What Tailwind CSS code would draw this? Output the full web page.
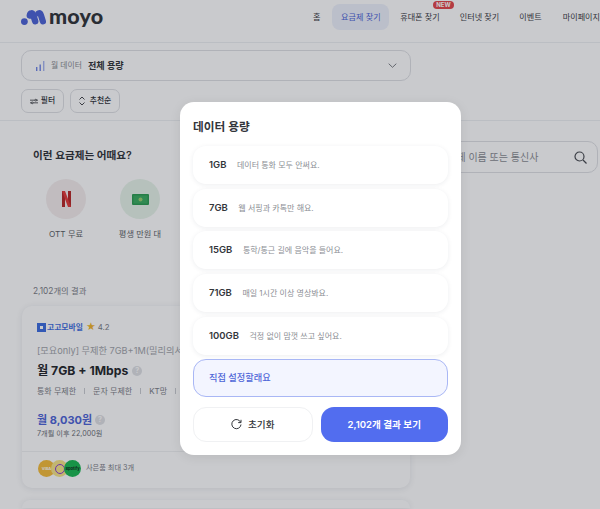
<!DOCTYPE html>
<html lang="ko">
<head>
    <meta charset="UTF-8">
    <title>moyo</title>
    <script src="https://cdn.jsdelivr.net/npm/@tailwindcss/browser@4"></script>
</head>
<body class="relative h-[509px] w-[600px] overflow-hidden bg-white text-[#26282c] font-['Inter','Noto_Sans_CJK_KR',sans-serif]">

    <!-- Header -->
    <header class="flex h-[43px] items-center border-b border-[#eef0f2] pb-[8px] pl-[21px]">
        <svg class="h-[15px] w-[25px] shrink-0" viewBox="0 0 25 15" fill="none" stroke="#4f66d8" stroke-linecap="round">
            <circle cx="3.4" cy="11.6" r="3.4" fill="#4f66d8" stroke="none"/>
            <path d="M8.8 5.5c.4-3 2.6-2.6 3.4-.6l2 6.4" stroke-width="6.4"/>
            <path d="M17.5 3.4c1.2-.4 1.9.3 2.4 1.6l2 6.4" stroke-width="6.2"/>
        </svg>
        <span class="ml-[3px] text-[21.5px] leading-none font-black tracking-[0.2px] font-['Lato'] text-[#33363b]">moyo</span>
        <nav class="ml-auto flex w-[287px] shrink-0 items-center text-[8.1px] whitespace-nowrap text-[#3d4046]">
            <span class="mr-[12px]">홈</span>
            <span class="flex h-[26px] w-[58px] items-center justify-center rounded-[8px] bg-[#edf1fb] text-[#4f66d8]">요금제 찾기</span>
            <span class="relative ml-[11px] w-[40px]">휴대폰 찾기
                <span class="absolute -top-[10px] right-[-14px] rounded-full bg-[#e5484d] px-[3px] text-[6px] leading-[8px] font-bold text-white">NEW</span>
            </span>
            <span class="ml-[20px] w-[40px]">인터넷 찾기</span>
            <span class="ml-[20px] w-[23px]">이벤트</span>
            <span class="ml-[21px]">마이페이지</span>
        </nav>
    </header>

    <!-- Filters -->
    <section class="border-b border-[#eef0f2] px-[21px] py-[7px]">
        <div class="flex h-[31px] w-[390px] items-center rounded-[10px] border border-[#dfe1e5] pr-[13px] pl-[14px]">
            <svg class="h-[10px] w-[9px]" viewBox="0 0 9 10" fill="#7388e6">
                <rect x="0" y="6" width="1.4" height="4"/>
                <rect x="3.5" y="3.5" width="1.4" height="6.5"/>
                <rect x="7" y="0" width="1.4" height="10" fill="#a9b7f0"/>
            </svg>
            <span class="ml-[6px] text-[7.8px] text-[#8b8e94]">월 데이터</span>
            <span class="ml-[6px] text-[9.1px] font-semibold text-[#33363b]">전체 용량</span>
            <svg class="ml-auto h-[5px] w-[9px]" viewBox="0 0 9 5" fill="none" stroke="#6d7077" stroke-width=".9">
                <path d="M.7.7l3.8 3.6 3.8-3.6"/>
            </svg>
        </div>
        <div class="mt-[8px] flex gap-[6px]">
            <div class="flex h-[24px] w-[43px] items-center justify-center gap-[3px] rounded-[7px] border border-[#dfe1e5] text-[7.8px] font-medium text-[#33363b]">
                <svg class="h-[7px] w-[8px]" viewBox="0 0 9 7" fill="none" stroke="#33363b" stroke-width=".9">
                    <path d="M0 2h5.5M7.5 2H9M0 5h1.5M3.5 5H9"/><circle cx="6.5" cy="2" r="1"/><circle cx="2.5" cy="5" r="1"/>
                </svg>
                필터
            </div>
            <div class="flex h-[24px] w-[50px] items-center justify-center gap-[5px] rounded-[7px] border border-[#dfe1e5] text-[7.8px] font-medium text-[#33363b]">
                <svg class="h-[10px] w-[6px]" viewBox="0 0 6 10" fill="none" stroke="#33363b" stroke-width=".9">
                    <path d="M.5 3.5L3 1l2.5 2.5M.5 6.5L3 9l2.5-2.5"/>
                </svg>
                추천순
            </div>
        </div>
    </section>

    <!-- Content -->
    <main class="flex pl-[22px]">
        <div class="w-[388px]">
            <h2 class="mt-[27px] ml-[11px] text-[10.6px] leading-[16px] font-semibold text-[#33363b]">이런 요금제는 어때요?</h2>
            <div class="mt-[15px] ml-[24px] flex gap-[34px]">
                <div class="flex w-[40px] flex-col items-center">
                    <div class="flex h-[40px] w-[40px] items-center justify-center rounded-full bg-[#f5eeee]">
                        <svg class="h-[16px] w-[9px]" viewBox="0 0 9 16">
                            <path d="M0 0h3v16l-3 0z" fill="#b92a2a"/><path d="M6 0h3v16H6z" fill="#b92a2a"/><path d="M0 0h3l6 16H6z" fill="#e33b3b"/>
                        </svg>
                    </div>
                    <span class="mt-[9px] text-[8.2px] leading-[12px] whitespace-nowrap text-[#5c5f66]">OTT 무료</span>
                </div>
                <div class="flex w-[40px] flex-col items-center">
                    <div class="flex h-[40px] w-[40px] items-center justify-center rounded-full bg-[#e7f4ea]">
                        <svg class="h-[11px] w-[17px]" viewBox="0 0 17 11">
                            <rect width="17" height="11" rx="1" fill="#2f9e54"/><rect x="1.5" y="1.5" width="14" height="8" fill="#3dae62"/><circle cx="8.5" cy="5.5" r="2" fill="#9ccf73"/>
                        </svg>
                    </div>
                    <span class="mt-[9px] text-[8.2px] leading-[12px] whitespace-nowrap text-[#5c5f66]">평생 만원 대</span>
                </div>
            </div>
            <p class="mt-[45px] ml-[11px] text-[8.3px] leading-[12px] text-[#7d8087]">2,102개의 결과</p>

            <!-- Plan card -->
            <article class="mt-[9px] h-[182px] rounded-[10px] bg-white shadow-[0_1px_6px_rgba(30,40,70,0.1)]">
                <div class="px-[15px] pt-[15px]">
                    <div class="flex items-center text-[7.8px] leading-[12px]">
                        <span class="flex h-[9px] w-[9px] items-center justify-center bg-[#3f6fe0]"><span class="h-[3px] w-[3px] bg-white"></span></span>
                        <span class="ml-[1px] font-bold text-[#3f6fe0]">고고모바일</span>
                        <span class="ml-[3px] text-[9.5px] leading-[12px] text-[#f1b52c]">★</span>
                        <span class="ml-[2px] text-[#7d8087]">4.2</span>
                    </div>
                    <p class="mt-[12px] text-[9.2px] leading-[12px] whitespace-nowrap text-[#a3a6ab]">[모요only] 무제한 7GB+1M(밀리의서재 무료)</p>
                    <div class="mt-[5px] flex items-center">
                        <span class="text-[12.2px] leading-[18px] font-bold text-[#26282c]">월 7GB + 1Mbps</span>
                        <span class="ml-[4px] flex h-[10px] w-[10px] items-center justify-center rounded-full bg-[#dfe1e5] text-[7px] font-bold text-white">?</span>
                    </div>
                    <div class="mt-[5px] flex items-center gap-[8px] text-[8px] leading-[12px] text-[#7d8087]">
                        <span>통화 무제한</span><span class="h-[6px] w-px bg-[#c9ccd1]"></span><span>문자 무제한</span><span class="h-[6px] w-px bg-[#c9ccd1]"></span><span>KT망</span><span class="h-[6px] w-px bg-[#c9ccd1]"></span>
                    </div>
                    <div class="mt-[15px] flex items-center">
                        <span class="text-[11px] leading-[16px] font-bold text-[#4f66d8]">월 8,030원</span>
                        <span class="ml-[3px] flex h-[10px] w-[10px] items-center justify-center rounded-full bg-[#dfe1e5] text-[7px] font-bold text-white">?</span>
                    </div>
                    <p class="text-[7.2px] leading-[11px] text-[#6d7077]">7개월 이후 22,000원</p>
                </div>
                <div class="mt-[12px] flex items-center border-t border-[#f0f1f3] pt-[8px] pl-[16px]">
                    <span class="flex h-[17px] w-[17px] items-center justify-center rounded-full bg-[#f5bd3c] text-[4px] font-bold text-white">VISA</span>
                    <span class="-ml-[4px] flex h-[17px] w-[17px] items-center justify-center rounded-full bg-[#f7e58a]"><span class="h-[10px] w-[10px] rounded-full border border-[#8a3fd1]"></span></span>
                    <span class="-ml-[4px] flex h-[17px] w-[17px] items-center justify-center rounded-full bg-[#1db954] text-[4px] font-bold text-[#12301d]">Spotify</span>
                    <span class="ml-[5px] text-[7.2px] text-[#7d8087]">사은품 최대 3개</span>
                </div>
            </article>
            <div class="mt-[12px] h-[8px] rounded-t-[10px] bg-white shadow-[0_1px_6px_rgba(30,40,70,0.1)]"></div>
        </div>

        <!-- Search -->
        <aside class="mt-[20px] ml-[12px]">
            <div class="flex h-[32px] w-[176px] items-center rounded-[10px] border border-[#dfe1e5] pr-[10px] pl-[15px] text-[10px] text-[#8b8e94]">
                <span class="whitespace-nowrap">요금제 이름 또는 통신사</span>
                <svg class="ml-auto h-[13px] w-[13px]" viewBox="0 0 13 13" fill="none" stroke="#4a4d53" stroke-width="1.2">
                    <circle cx="5.5" cy="5.5" r="4.5"/><path d="M9 9l3.5 3.5"/>
                </svg>
            </div>
        </aside>
    </main>

    <!-- Modal -->
    <div class="absolute inset-0 flex items-start justify-center bg-[rgba(10,14,27,0.22)] pt-[102px] pl-[41px]">
        <div class="h-[353px] w-[281px] rounded-[14px] bg-white px-[13px] pt-[16px] shadow-[0_2px_12px_rgba(0,0,0,0.08)]">
            <h3 class="text-[11.7px] leading-[18px] font-semibold text-[#33363b]">데이터 용량</h3>
            <ul class="mt-[10px] flex flex-col gap-[4.67px]">
                <li class="flex h-[38px] items-center gap-[10.5px] rounded-[13px] bg-white pl-[16px] shadow-[0_1px_5px_rgba(30,40,70,0.08)]">
                    <span class="text-[9.5px] font-semibold text-[#33363b]">1GB</span>
                    <span class="text-[8px] text-[#8b8e94]">데이터 통화 모두 안써요.</span>
                </li>
                <li class="flex h-[38px] items-center gap-[10.5px] rounded-[13px] bg-white pl-[16px] shadow-[0_1px_5px_rgba(30,40,70,0.08)]">
                    <span class="text-[9.5px] font-semibold text-[#33363b]">7GB</span>
                    <span class="text-[8px] text-[#8b8e94]">웹 서핑과 카톡만 해요.</span>
                </li>
                <li class="flex h-[38px] items-center gap-[10.5px] rounded-[13px] bg-white pl-[16px] shadow-[0_1px_5px_rgba(30,40,70,0.08)]">
                    <span class="text-[9.5px] font-semibold text-[#33363b]">15GB</span>
                    <span class="text-[8px] text-[#8b8e94]">통학/통근 길에 음악을 들어요.</span>
                </li>
                <li class="flex h-[38px] items-center gap-[10.5px] rounded-[13px] bg-white pl-[16px] shadow-[0_1px_5px_rgba(30,40,70,0.08)]">
                    <span class="text-[9.5px] font-semibold text-[#33363b]">71GB</span>
                    <span class="text-[8px] text-[#8b8e94]">매일 1시간 이상 영상봐요.</span>
                </li>
                <li class="flex h-[38px] items-center gap-[10.5px] rounded-[13px] bg-white pl-[16px] shadow-[0_1px_5px_rgba(30,40,70,0.08)]">
                    <span class="text-[9.5px] font-semibold text-[#33363b]">100GB</span>
                    <span class="text-[8px] text-[#8b8e94]">걱정 없이 맘껏 쓰고 싶어요.</span>
                </li>
                <li class="flex h-[38px] items-center rounded-[13px] border border-[#a9b7f5] bg-[#f3f5ff] pl-[15px]">
                    <span class="text-[9.2px] font-medium text-[#4f66d8]">직접 설정할래요</span>
                </li>
            </ul>
            <div class="mt-[10px] flex gap-[8px]">
                <button class="flex h-[35px] w-[120px] items-center justify-center gap-[6px] rounded-[13px] border border-[#f0f1f3] bg-white text-[9.6px] font-medium text-[#33363b]">
                    <svg class="h-[11px] w-[11px]" viewBox="0 0 11 11" fill="none" stroke="#33363b" stroke-width="1">
                        <path d="M9.6 3.2A4.6 4.6 0 1 0 10 5.5"/><path d="M10 .8v2.8H7.2"/>
                    </svg>
                    초기화
                </button>
                <button class="h-[35px] w-[128px] rounded-[13px] bg-[#526def] text-[9.6px] font-semibold text-white">2,102개 결과 보기</button>
            </div>
        </div>
    </div>
</body>
</html>
